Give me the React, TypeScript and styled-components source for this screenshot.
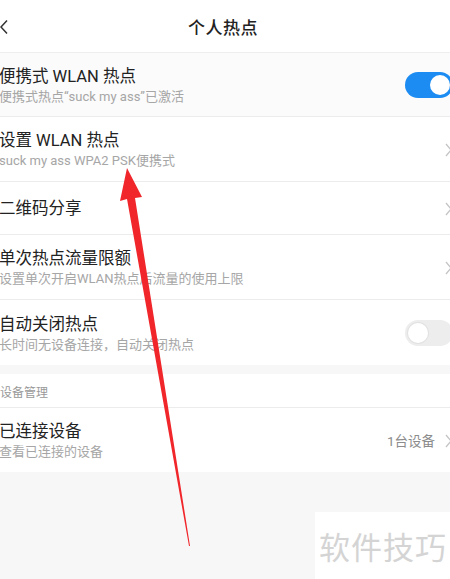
import React from "react";
import styled, { createGlobalStyle } from "styled-components";

const Global = createGlobalStyle`
  html, body { margin: 0; padding: 0; background: #f7f7f7; }
  body { font-family: Roboto, "Noto Sans CJK SC", sans-serif; width: 450px; height: 579px; overflow: hidden; }
  * { box-sizing: border-box; }
`;

const Page = styled.div`
  position: relative;
  width: 450px;
  height: 579px;
  background: #f7f7f7;
  display: flex;
  flex-direction: column;
`;

const Header = styled.div`
  height: 53px;
  background: #fff;
  display: flex;
  align-items: center;
  justify-content: center;
  position: relative;
  border-bottom: 1px solid #eeeeee;
`;

const Back = styled.div`
  position: absolute;
  left: -1px;
  top: 19px;
  width: 12px;
  height: 16px;
`;

const Title = styled.div`
  font-size: 17px;
  color: #222;
  font-weight: 500;
  letter-spacing: 0.5px;
  margin-left: -4px;
  padding-top: 1px;
`;

const Group = styled.div`
  background: #fff;
  display: flex;
  flex-direction: column;
`;

const Row = styled.div<{ $h: number; $tint?: boolean; $last?: boolean }>`
  height: ${(p) => p.$h}px;
  background: ${(p) => (p.$tint ? "#fbfbfb" : "#fff")};
  border-bottom: ${(p) => (p.$last ? "none" : "1px solid #ececec")};
  display: flex;
  align-items: center;
  padding-left: 0;
`;

const Texts = styled.div`
  flex: 1;
  display: flex;
  flex-direction: column;
  margin-left: -1px;
  padding-top: 2px;
`;

const Main = styled.div`
  font-size: 16.5px;
  line-height: 22px;
  color: #222;
`;

const Sub = styled.div`
  font-size: 13px;
  line-height: 18px;
  color: #a6a6a6;
`;

const Right = styled.div`
  display: flex;
  align-items: center;
  gap: 10px;
`;

const Value = styled.span`
  font-size: 13.5px;
  color: #8c8c8c;
`;

const Chevron = styled.div`
  width: 7px;
  height: 14px;
  margin-right: -2px;
`;

const Toggle = styled.div<{ $on: boolean }>`
  width: 48px;
  height: 26px;
  margin-right: -3px;
  border-radius: 13px;
  background: ${(p) => (p.$on ? "#1c8cf2" : "#ededed")};
  display: flex;
  align-items: center;
  justify-content: ${(p) => (p.$on ? "flex-end" : "flex-start")};
  padding: 0 3px;
`;

const Knob = styled.div<{ $on: boolean }>`
  width: 20px;
  height: 20px;
  border-radius: 50%;
  background: #fff;
  box-shadow: ${(p) => (p.$on ? "none" : "0 0 0 1px #e2e2e2")};
`;

const Gap = styled.div`
  height: 9px;
  background: #f7f7f7;
`;

const SectionHead = styled.div`
  height: 34px;
  background: #fff;
  border-bottom: 1px solid #ececec;
  display: flex;
  align-items: center;
  font-size: 12px;
  color: #999;
  padding-top: 2px;
`;

const Filler = styled.div`
  flex: 1;
  background: #f7f7f7;
`;

const Watermark = styled.div`
  position: absolute;
  left: 315px;
  top: 512px;
  width: 135px;
  height: 67px;
  background: #fff;
  display: flex;
  align-items: center;
  padding-left: 4px;
  font-family: "Noto Sans CJK SC", sans-serif;
  font-size: 31px;
  color: #d4d4d4;
  letter-spacing: 1px;
`;

const Arrow = styled.svg`
  position: absolute;
  left: 0;
  top: 0;
  pointer-events: none;
`;

const ChevronIcon = () => (
  <Chevron>
    <svg width="7" height="14" viewBox="0 0 7 14">
      <path d="M1 1 L6 7 L1 13" fill="none" stroke="#c4c4c4" strokeWidth="1.3" />
    </svg>
  </Chevron>
);

type Item = {
  title: string;
  sub?: string;
  h: number;
  kind: "toggle-on" | "toggle-off" | "chev";
  value?: string;
  tint?: boolean;
};

const items: Item[] = [
  { title: "便携式 WLAN 热点", sub: "便携式热点“suck my ass”已激活", h: 64, kind: "toggle-on", tint: true },
  { title: "设置 WLAN 热点", sub: "suck my ass WPA2 PSK便携式", h: 65, kind: "chev" },
  { title: "二维码分享", h: 53, kind: "chev" },
  { title: "单次热点流量限额", sub: "设置单次开启WLAN热点后流量的使用上限", h: 65, kind: "chev" },
  { title: "自动关闭热点", sub: "长时间无设备连接，自动关闭热点", h: 65, kind: "toggle-off" },
];

const renderRight = (it: Item) => {
  if (it.kind === "chev")
    return (
      <Right>
        {it.value && <Value>{it.value}</Value>}
        <ChevronIcon />
      </Right>
    );
  const on = it.kind === "toggle-on";
  return (
    <Toggle $on={on}>
      <Knob $on={on} />
    </Toggle>
  );
};

export default function App() {
  return (
    <>
      <Global />
      <Page>
        <Header>
          <Back>
            <svg width="12" height="16" viewBox="0 0 12 16">
              <path d="M8 1.5 L2 8 L8 14.5" fill="none" stroke="#333" strokeWidth="1.5" />
            </svg>
          </Back>
          <Title>个人热点</Title>
        </Header>
        <Group>
          {items.map((it, i) => (
            <Row key={it.title} $h={it.h} $tint={it.tint} $last={i === items.length - 1}>
              <Texts>
                <Main>{it.title}</Main>
                {it.sub && <Sub>{it.sub}</Sub>}
              </Texts>
              {renderRight(it)}
            </Row>
          ))}
        </Group>
        <Gap />
        <SectionHead>设备管理</SectionHead>
        <Group>
          <Row $h={64} $last>
            <Texts>
              <Main>已连接设备</Main>
              <Sub>查看已连接的设备</Sub>
            </Texts>
            {renderRight({ title: "", h: 64, kind: "chev", value: "1台设备" })}
          </Row>
        </Group>
        <Filler />
        <Watermark>软件技巧</Watermark>
        <Arrow width="450" height="579" viewBox="0 0 450 579">
          <polygon points="127,168 142,197 135,198 190,546 189,546 127,199 120,201" fill="#f0262b" />
        </Arrow>
      </Page>
    </>
  );
}
